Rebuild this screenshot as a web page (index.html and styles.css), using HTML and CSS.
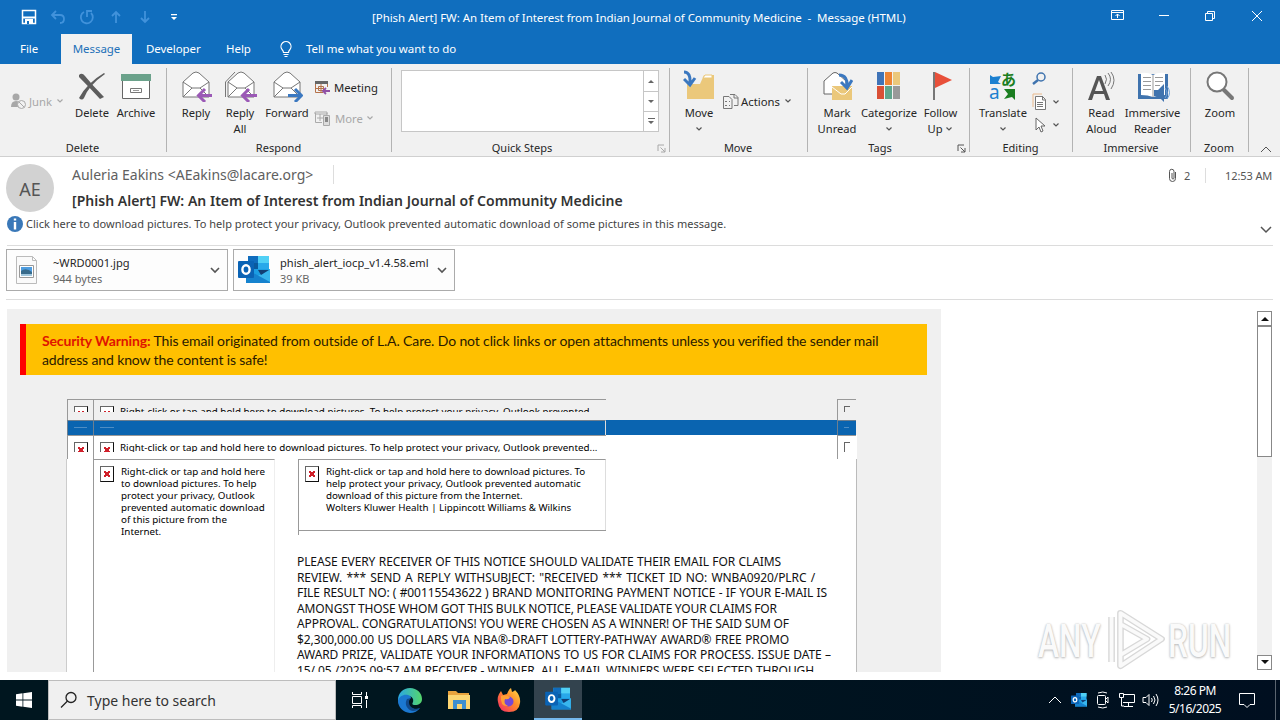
FILE: index.html
```html
<!DOCTYPE html>
<html lang="en">
<head>
<meta charset="utf-8">
<title>[Phish Alert] FW: An Item of Interest - Message (HTML)</title>
<link rel="stylesheet" href="styles.css">
</head>
<body>
<svg width="0" height="0" class="defs">
  <symbol id="chev" viewBox="0 0 8 6"><path d="M1.500 1.500 4 4l2.500-2.500" fill="none" stroke="currentColor" stroke-width="1.200"/></symbol>
  <symbol id="launch" viewBox="0 0 9 9"><path d="M1 7V1h6M3.500 3.500 8 8M8 4v4H4" fill="none" stroke="currentColor"/></symbol>
  <symbol id="outlook" viewBox="0 0 32 30">
    <path d="M10 1h21v14H10z" fill="#28a8ea"/><path d="M10 1h10v7H10z" fill="#0f6cbd"/><path d="M20 1h11v7H20z" fill="#50d0f5"/><path d="M10 8h10v7H10z" fill="#0a5a9e"/><path d="M8 14h24v14H8z" fill="#1b9de2"/><path d="M32 14 18 22l14 6z" fill="#38b6ee"/><path d="M8 14l24 13v1H8z" fill="#1582ce"/><path d="M20 15h11l-8 5z" fill="#123f75"/>
    <rect x="0" y="6" width="16" height="17" rx="1" fill="#0a63b5"/><ellipse cx="8" cy="14.500" rx="3.600" ry="4.300" fill="none" stroke="#fff" stroke-width="2.400"/>
  </symbol>
  <symbol id="env" viewBox="0 0 32 30"><path d="M3 12 13 3q3-2 6 0l10 9v15H3z" fill="#fff" stroke="#777"/><path d="m3 12 9 6h8l9-6M3 27l9-9M29 27l-9-9" fill="none" stroke="#777"/></symbol>
</svg>

<header class="titlebar">
  <div class="quick">
    <svg width="16" height="16" viewBox="0 0 16 16"><path d="M1.500 1.500h13v13h-13z" fill="none" stroke="#fff" stroke-width="1.500"/><path d="M1 7.500h14v2H1zM4 10h8v5H4z" fill="#fff"/><path d="M6 12h2v3H6z" fill="#106ebe"/></svg>
    <svg class="dim" width="16" height="16" viewBox="0 0 16 16"><path d="M6 2 2 6l4 4M2 6h8q4 0 4 4t-4 4" /></svg>
    <svg class="dim" width="16" height="16" viewBox="0 0 16 16"><path d="M5 3A6 6 0 1 0 12 4M8 8V2h5"/></svg>
    <svg class="dim" width="16" height="16" viewBox="0 0 16 16"><path d="M8 14V3M4 7l4-4 4 4"/></svg>
    <svg class="dim" width="16" height="16" viewBox="0 0 16 16"><path d="M8 2v11M4 9l4 4 4-4"/></svg>
    <svg width="16" height="16" viewBox="0 0 16 16"><path d="M5 5h6v1.300H5zM5 8h6l-3 3z" fill="#fff"/></svg>
  </div>
  <div class="title">[Phish Alert] FW: An Item of Interest from Indian Journal of Community Medicine&nbsp; -&nbsp; Message (HTML)</div>
  <svg class="winbtns" width="160" height="20" viewBox="0 0 160 20" fill="none" stroke="#fff"><path d="M5.500 5.500h12v9h-12zM5.500 7.500h12M11.500 13V9M9.500 11l2-2 2 2M53 10.500h10M99.500 8.500h7v7h-7zM101.500 8V6.500h7v7H107M146 6l10 10M156 6l-10 10"/></svg>
</header>
<nav class="tabs">
  <span class="tab file">File</span><span class="tab active">Message</span><span class="tab dev">Developer</span><span class="tab help">Help</span>
  <svg class="bulb" width="14" height="18" viewBox="0 0 14 18" fill="none" stroke="#fff" stroke-width="1.200"><path d="M4.500 12.500Q4.500 11 3 9.500a5 5 0 1 1 8 0q-1.500 1.500-1.500 3zM4.500 14.500h5M5.500 16.500h3"/></svg>
  <span class="tell">Tell me what you want to do</span>
</nav>

<section class="ribbon">
  <div class="group g-delete">
    <div class="items">
      <div class="small junk"><svg width="17" height="17" viewBox="0 0 17 17"><circle cx="6" cy="4" r="3.500" fill="#a8a8a8"/><path d="M1 14q0-6 5-6 4 0 4 2l-2 4z" fill="#a8a8a8"/><circle cx="11.500" cy="11.500" r="4" fill="#f1f1f1" stroke="#a8a8a8"/><path d="m9 9 5 5" stroke="#a8a8a8"/></svg><span>Junk</span><svg class="dd" width="8" height="6"><use href="#chev"/></svg></div>
      <div class="big b-del"><svg width="32" height="32" viewBox="0 0 32 32"><path d="M3 5q3-3 6 1 8 10 19 21l-4 2Q13 17 3 7z" fill="#5d5d5d"/><path d="M29 4Q13 15 8 28q-2 3-5 0Q11 13 28 3z" fill="#5d5d5d"/></svg><span>Delete</span></div>
      <div class="big b-arc"><svg width="32" height="32" viewBox="0 0 32 32"><path d="M2.500 9.500h27v19h-27z" fill="#fff" stroke="#666"/><path d="M1 4h30v7H1z" fill="#6ba28b"/><path d="M10.500 18.500h11v4h-11z" fill="#fff" stroke="#777"/><path d="M13 20.500h6" stroke="#999"/></svg><span>Archive</span></div>
    </div><div class="glabel">Delete</div>
  </div>
  <div class="group g-respond">
    <div class="items">
      <div class="big w44"><svg width="32" height="32" viewBox="0 0 32 32"><use href="#env" width="32" height="30"/><path d="M32 25.500H19M25 19l-6.500 6.500L25 32" fill="none" stroke="#9b59b6" stroke-width="3"/></svg><span>Reply</span></div>
      <div class="big w44"><svg width="34" height="32" viewBox="0 0 34 32"><path d="M2.500 27V12L12 2" fill="none" stroke="#777"/><use href="#env" x="2" width="32" height="30"/><path d="M34 25.500H20M26 19l-6.500 6.500L26 32" fill="none" stroke="#9b59b6" stroke-width="3"/></svg><span>Reply<br>All</span></div>
      <div class="big w50"><svg width="32" height="32" viewBox="0 0 32 32"><use href="#env" width="32" height="30"/><path d="M17 25.500h13M24 19l6.500 6.500L24 32" fill="none" stroke="#3b78c0" stroke-width="3"/></svg><span>Forward</span></div>
      <div class="stack">
        <div class="small"><svg width="16" height="16" viewBox="0 0 16 16"><path d="M1 2h13v3H1z" fill="#666"/><path d="M1.500 5v8.500H9M13.500 5v3M4.500 7.500h5v4h-5zM1 9.500h8M7 5v9" fill="none" stroke="#b5724a"/><path d="M16 12H9M12 9l-3 3 3 3" fill="none" stroke="#9050a5" stroke-width="1.800"/></svg><span class="meet">Meeting</span></div>
        <div class="small off"><svg width="17" height="16" viewBox="0 0 17 16"><path d="M1 2h12v2H1zM1.500 3v9.500H8M13 3v2M3 8h6M6 4v7" fill="none" stroke="#aaa"/><path d="M9.500 5.500h6v10h-6z" fill="#ddd" stroke="#aaa"/><path d="M11 7h3v5h-3z" fill="#888"/></svg><span class="meet">More</span><svg class="dd" width="8" height="6"><use href="#chev"/></svg></div>
      </div>
    </div><div class="glabel">Respond</div>
  </div>
  <div class="group g-quick">
    <div class="items"><div class="gallery"><div class="gspin"><svg width="7" height="5"><path d="M0 4h6L3 1z" fill="#666"/></svg><svg width="7" height="5"><path d="M0 1h6L3 4z" fill="#666"/></svg><svg width="7" height="8"><path d="M0 1h7v1H0zM0 4h6L3 7z" fill="#666"/></svg></div></div></div>
    <div class="glabel">Quick Steps<svg class="launch off" width="9" height="9"><use href="#launch"/></svg></div>
  </div>
  <div class="group g-move">
    <div class="items">
      <div class="big w40"><svg width="32" height="32" viewBox="0 0 32 32"><path d="M4 14h13l4-9h10v24H4z" fill="#ebc87b"/><path d="M20 8l2-3h7v3z" fill="#fff" stroke="#ebc87b"/><path d="M1 2q7 0 6 12M1 9l6 6 5-7" fill="none" stroke="#3b78c0" stroke-width="3"/></svg><span>Move</span><svg class="dd" width="8" height="6"><use href="#chev"/></svg></div>
      <div class="small act"><svg width="17" height="17" viewBox="0 0 17 17"><path d="M1.500 3.500H7l3 3v9H1.500zM8 1.500h5l3 3v8h-4M12 1v4h4M3 8.500h2M7 8.500h1M3 12.500h2M7 12.500h1" fill="none" stroke="#777"/></svg><span>Actions</span><svg class="dd" width="8" height="6"><use href="#chev"/></svg></div>
    </div><div class="glabel">Move</div>
  </div>
  <div class="group g-tags">
    <div class="items">
      <div class="big w44"><svg width="32" height="32" viewBox="0 0 32 32"><path d="M3 24V11l9-8q2-1 4 0l9 8v13z" fill="#fff" stroke="#666"/><path d="M11 16h20v14H11z" fill="#ebc87b"/><path d="m11 17 9 7h4l7-7" fill="none" stroke="#fff"/><path d="M18 5q9 0 8 12M20 12l6 6 5-8" fill="none" stroke="#3b78c0" stroke-width="3"/></svg><span>Mark<br>Unread</span></div>
      <div class="big w60"><svg width="32" height="32" viewBox="0 0 32 32"><path d="M4 2h7v13H4z" fill="#3f73b7"/><path d="M12 2h7v13h-7z" fill="#ed8434"/><path d="M20 2h7v13h-7z" fill="#ebc87b"/><path d="M4 16h7v13H4z" fill="#d94f35"/><path d="M12 16h7v13h-7z" fill="#5fa58c"/><path d="M20 16h7v13h-7z" fill="#999"/></svg><span>Categorize</span><svg class="dd" width="8" height="6"><use href="#chev"/></svg></div>
      <div class="big w43"><svg width="32" height="32" viewBox="0 0 32 32"><path d="M8 2h2v28H8z" fill="#777"/><path d="M10 2 27 10 10 18z" fill="#e8503a"/></svg><span>Follow<br>Up <svg class="dd in" width="8" height="6"><use href="#chev"/></svg></span></div>
    </div><div class="glabel">Tags<svg class="launch" width="9" height="9"><use href="#launch"/></svg></div>
  </div>
  <div class="group g-edit">
    <div class="items">
      <div class="big w48"><svg width="32" height="32" viewBox="0 0 32 32"><path d="M3 5l3 2 8-1-3 6 3 2H3z" fill="#1c80d0"/><text x="2" y="29" class="tr-a">a</text><text x="14" y="15" class="tr-j">あ</text><path d="M17 19h11v11l-3-3-8 2 4-5z" fill="#1b7e20"/></svg><span>Translate</span><svg class="dd" width="8" height="6"><use href="#chev"/></svg></div>
      <div class="tools">
        <div><svg width="16" height="16" viewBox="0 0 16 16" fill="none" stroke="#3f73ae"><circle cx="9" cy="6" r="4" stroke-width="1.500"/><path d="m6 9-5 4" stroke-width="2.500"/></svg></div>
        <div><svg width="16" height="18" viewBox="0 0 16 18"><path d="M1 14V1h9" fill="none" stroke="#e9b98c"/><path d="M3.500 3.500h7l3 3v10h-10zM10.500 3v4h3M5 9.500h6M5 11.500h6M5 13.500h6" fill="#fff" stroke="#777"/></svg><svg class="dd" width="8" height="6"><use href="#chev"/></svg></div>
        <div><svg width="16" height="16" viewBox="0 0 16 16"><path d="M4 1v12l3-3 2 5 2-1-2-5h4z" fill="#fff" stroke="#666"/></svg><svg class="dd" width="8" height="6"><use href="#chev"/></svg></div>
      </div>
    </div><div class="glabel">Editing</div>
  </div>
  <div class="group g-imm">
    <div class="items">
      <div class="big w43"><svg width="32" height="32" viewBox="0 0 32 32"><path fill-rule="evenodd" d="m2 30 9-24h4l9 24h-4l-2-6H8l-2 6zm7-9h8l-4-11z" fill="#555"/><path d="M19 5q3 4 0 9M22 3q5 6 0 13M25 2q6 8 0 17" fill="none" stroke="#777"/></svg><span>Read<br>Aloud</span></div>
      <div class="big w59"><svg width="34" height="32" viewBox="0 0 34 32"><path d="M2 4h30v25H2z" fill="#3f73ae"/><path d="M5 3q7-1 12 2v22q-5-2-12-2zM29 3q-7-1-12 2v22q5-2 12-2z" fill="#fff"/><path d="M7 7.500h8M7 11.500h8M7 15.500h8M7 19.500h8M19 7.500h8M19 11.500h8M19 15.500h5M17 5v22" stroke="#999"/><path d="M18 20h4l6-6v18l-6-6h-4z" fill="#3f73ae"/><path d="M29 18q4 5 0 10M31 16q5 7 0 13" fill="none" stroke="#6ca0d8"/></svg><span>Immersive<br>Reader</span></div>
    </div><div class="glabel">Immersive</div>
  </div>
  <div class="group g-zoom">
    <div class="items"><div class="big w58"><svg width="32" height="32" viewBox="0 0 32 32"><path d="m20 20 8 8" stroke="#777" stroke-width="4" stroke-linecap="round"/><circle cx="13" cy="12" r="9.500" fill="#fff" stroke="#777" stroke-width="2"/></svg><span>Zoom</span></div></div>
    <div class="glabel">Zoom</div>
  </div>
  <svg class="collapse" width="12" height="7" viewBox="0 0 12 7"><path d="m1 6 5-5 5 5" fill="none" stroke="#555"/></svg>
</section>

<main class="reader">
  <section class="mailhead">
    <div class="avatar">AE</div>
    <div class="who"><div class="from"><span>Auleria Eakins &lt;AEakins@lacare.org&gt;</span></div><div class="subject">[Phish Alert] FW: An Item of Interest from Indian Journal of Community Medicine</div></div>
    <div class="meta"><svg width="9" height="15" viewBox="0 0 9 15"><path d="M7.500 4v6.500a3 3 0 0 1-6 0V3.500a2 2 0 0 1 4.500 0V10a1 1 0 0 1-2 0V5" fill="none" stroke="#555"/></svg><span class="cnt">2</span><span class="time">12:53 AM</span></div>
  </section>
  <section class="infobar"><svg width="16" height="16" viewBox="0 0 16 16"><circle cx="8" cy="8" r="8" fill="#3a78b8"/><path d="M6.800 2.500h2.400v2H6.800zM6.800 6h2.400v7.500H6.800z" fill="#fff"/></svg><span>Click here to download pictures. To help protect your privacy, Outlook prevented automatic download of some pictures in this message.</span><svg class="more" width="12" height="8" viewBox="0 0 12 8"><path d="m1 1 5 5 5-5" fill="none" stroke="#555" stroke-width="1.500"/></svg></section>
  <section class="attachments">
    <div class="att"><svg class="jpg" width="32" height="32" viewBox="0 0 32 32"><path d="M5.500 2.500h16l4 4v23h-20zM21.500 2.500v4h4" fill="#fafafa" stroke="#bbb"/><path d="M8.500 11.500h14v12h-14z" fill="#fff" stroke="#999"/><path d="M10 13h11v9H10z" fill="#4e9de0"/><path d="M10 17q5-4 11 1v4H10z" fill="#376b8c"/><path d="M10 20h11v2H10z" fill="#9fc6dd"/></svg><div class="fn"><b class="n1">~WRD0001.jpg</b><small>944 bytes</small></div><svg class="ac" width="10" height="7" viewBox="0 0 10 7"><path d="m1 1 4 4 4-4" fill="none" stroke="#555" stroke-width="1.600"/></svg></div>
    <div class="att"><svg width="32" height="30"><use href="#outlook"/></svg><div class="fn"><b class="n2">phish_alert_iocp_v1.4.58.eml</b><small>39 KB</small></div><svg class="ac" width="10" height="7" viewBox="0 0 10 7"><path d="m1 1 4 4 4-4" fill="none" stroke="#555" stroke-width="1.600"/></svg></div>
  </section>
  <section class="viewport">
    <div class="mail">
      <div class="warning"><div class="wl wl1"><b>Security Warning:</b> This email originated from outside of L.A. Care. Do not click links or open attachments unless you verified the sender mail</div><div class="wl wl2">address and know the content is safe!</div></div>
      <div class="sheet">
        <div class="strip s1"><div class="cell c1"><i class="ph"></i></div><div class="cell c2"><i class="ph"></i><span class="pt">Right-click or tap and hold here to download pictures. To help protect your privacy, Outlook prevented</span></div><div class="cell c3"><i class="ph"></i></div></div>
        <div class="strip s2"><div class="cell c1"><i class="dash"></i></div><div class="cell c2"><i class="dash"></i></div><div class="cell c3"><i class="dash short"></i></div></div>
        <div class="strip s3"><div class="cell c1"><i class="ph"></i></div><div class="cell c2"><i class="ph"></i><span class="pt">Right-click or tap and hold here to download pictures. To help protect your privacy, Outlook prevented...</span></div><div class="cell c3"><i class="ph"></i></div></div>
        <div class="cols">
          <div class="side"><i class="ph"></i><span class="pt">Right-click or tap and hold here<br>to download pictures. To help<br>protect your privacy, Outlook<br>prevented automatic download<br>of this picture from the<br>Internet.</span></div>
          <div class="content">
            <div class="logo"><i class="ph"></i><span class="pt">Right-click or tap and hold here to download pictures. To<br>help protect your privacy, Outlook prevented automatic<br>download of this picture from the Internet.<br>Wolters Kluwer Health | Lippincott Williams &amp; Wilkins</span></div><div class="stub"></div>
            <div class="text">
              <div class="l1">PLEASE EVERY RECEIVER OF THIS NOTICE SHOULD VALIDATE THEIR EMAIL FOR CLAIMS</div>
              <div class="l2">REVIEW. *** SEND A REPLY WITHSUBJECT: "RECEIVED *** TICKET ID NO: WNBA0920/PLRC /</div>
              <div class="l3">FILE RESULT NO: ( #00115543622 ) BRAND MONITORING PAYMENT NOTICE - IF YOUR E-MAIL IS</div>
              <div class="l4">AMONGST THOSE WHOM GOT THIS BULK NOTICE, PLEASE VALIDATE YOUR CLAIMS FOR</div>
              <div class="l5">APPROVAL. CONGRATULATIONS! YOU WERE CHOSEN AS A WINNER! OF THE SAID SUM OF</div>
              <div class="l6">$2,300,000.00 US DOLLARS VIA NBA®-DRAFT LOTTERY-PATHWAY AWARD® FREE PROMO</div>
              <div class="l7">AWARD PRIZE, VALIDATE YOUR INFORMATIONS TO US FOR CLAIMS FOR PROCESS. ISSUE DATE –</div>
              <div class="l8">15/ 05 /2025 09:57 AM RECEIVER - WINNER. ALL E-MAIL WINNERS WERE SELECTED THROUGH</div>
            </div>
          </div>
        </div>
      </div>
    </div>
    <div class="scroll"><div class="sb"><svg width="8" height="5"><path d="M0 5h8L4 1z" fill="#111"/></svg></div><div class="thumb"></div><div class="track"></div><div class="sb"><svg width="8" height="5"><path d="M0 0h8L4 4z" fill="#111"/></svg></div></div>
  </section>
</main>
<div class="watermark"><span>ANY</span><svg width="60" height="66" viewBox="5 0 54 66" preserveAspectRatio="none"><g fill="none" stroke-linejoin="round"><path d="M18 58V5l37 26-37 27V16l24 15-24 16M10 54V9" stroke="#d8d8d8" stroke-width="6"/><path d="M18 58V5l37 26-37 27V16l24 15-24 16M10 54V9" stroke="#fafafa" stroke-width="3.500"/></g></svg><span>RUN</span></div>

<footer class="taskbar">
  <div class="start"><svg width="16" height="16" viewBox="0 0 16 16"><path d="M0 2.200 6.500 1.300V7.600H0zM7.300 1.200 16 0v7.600H7.300zM0 8.400h6.500v6.300L0 13.800zM7.300 8.400H16V16l-8.700-1.200z" fill="#fff"/></svg></div>
  <div class="search"><svg width="18" height="18" viewBox="0 0 18 18" fill="none" stroke="#222" stroke-width="1.300"><circle cx="11" cy="6.500" r="5"/><path d="m7.500 10-6.500 6.500"/></svg><span>Type here to search</span></div>
  <div class="task"><svg width="18" height="18" viewBox="0 0 18 18" fill="none" stroke="#fff"><path d="M1.500 1v2.500h9V1M1.500 5.500h9v7h-9zM1.500 17v-2.500h9V17M15.500 1v4M15.500 9v8"/><path d="M14 5h3v3h-3z" fill="#fff" stroke="none"/></svg></div>
  <div class="task"><svg width="26" height="26" viewBox="0 0 26 26"><defs><linearGradient id="e1" x1="0" y1="0" x2="1" y2="0"><stop offset="0" stop-color="#2aa7e5"/><stop offset="1" stop-color="#55d66b"/></linearGradient></defs><path d="M1 13C1 6 6 1 13 1s12 5 12 11c0 4-3 6-7 6-3 0-3-1-2-3 1-3-1-6-5-6-5 0-9 3-9 8z" fill="url(#e1)"/><path d="M1 14c1-5 6-7 10-6 2 .5 3 2 3 3-5 3-3 10 3 11 3 .5 5-.5 6-1-2 3-6 5-10 5C6 25.500 1 20 1 14z" fill="#1b78d0"/><path d="M10 12c-3 5 0 11 6 12 3 0 5-1 7-3-5 2-11 0-11-6 0-2 1-3 2-4z" fill="#114a8b"/></svg></div>
  <div class="task"><svg width="24" height="24" viewBox="0 0 24 24"><path d="M1 3h8l2 2h11v5H1z" fill="#e8a33d"/><path d="M1 7h22v14H1z" fill="#fcd672"/><path d="M6 12h13v9h-4v-5h-5v5H6z" fill="#3d8fd0"/></svg></div>
  <div class="task"><svg width="26" height="26" viewBox="0 0 26 26"><defs><linearGradient id="f1" x1="1" y1="0" x2="0" y2="1"><stop offset="0" stop-color="#ffe14a"/><stop offset=".45" stop-color="#ff8a2a"/><stop offset="1" stop-color="#f4246c"/></linearGradient></defs><path d="M3 7l2-3 2 4 4-1q2-5 4-6l1 4q3-1 3-2 6 6 5 13-1 9-11 9T2 15q-1-4 1-8z" fill="url(#f1)"/><circle cx="12.500" cy="14.500" r="5" fill="#7548d8"/><path d="M5 9q5-2 9 1-1 3-5 2-2 5 3 7-8 1-7-10z" fill="#ff9f35"/></svg></div>
  <div class="task on"><svg width="26" height="24"><use href="#outlook"/></svg></div>
  <div class="tray"><div class="icons">
    <svg width="14" height="8" viewBox="0 0 14 8" fill="none" stroke="#fff"><path d="m1 7 6-6 6 6"/></svg>
    <svg width="16" height="16"><use href="#outlook"/></svg>
    <svg width="16" height="18" viewBox="0 0 16 18" fill="none" stroke="#fff"><path d="M3 2q5-2 9 0M3 16q5 2 9 0"/><rect x="2.500" y="4.500" width="8" height="9" rx="1"/><path d="m11 8 2-2v6l-2-2"/></svg>
    <svg width="18" height="16" viewBox="0 0 18 16" fill="none" stroke="#fff"><path d="M5 2.500h11.500v8H5M10.500 11v3M6 14.500h9M1.500 1.500h4v4h-4zM3.500 6v8H6"/></svg>
    <svg width="18" height="16" viewBox="0 0 18 16" fill="none" stroke="#fff"><path d="M1 5.500h3l3-3v11l-3-3H1zM9.500 6q1.500 2 0 4M11.500 4q3 4 0 8M14 2q4 6 0 12"/></svg></div>
    <div class="clock">8:26 PM<br>5/16/2025</div>
    <svg class="note" width="18" height="18" viewBox="0 0 18 18" fill="none" stroke="#fff"><path d="M1.500 2.500h15v11H12l-3 3-3-3H1.500z"/></svg>
    <i class="peek"></i>
  </div>
</footer>
</body>
</html>
```
FILE: styles.css
```css
* { box-sizing: border-box; }
body { margin: 0; width: 1280px; height: 720px; overflow: hidden; background: #fff; color: #262626; font-family: "Noto Sans", sans-serif; font-size: 12px; display: flex; flex-direction: column; }
svg { display: block; flex: none; }
.defs { position: absolute; }
.titlebar { height: 34px; background: #106ebe; color: #fff; display: flex; align-items: center; flex: none; }
.quick { display: flex; gap: 13px; padding-left: 21px; width: 372px; }
.dim path { fill: none; stroke: #4192db; stroke-width: 1.800; }
.title { width: 640px; line-height: 18px; white-space: nowrap; padding-top: 2px; font-size: 11.500px; letter-spacing: -.05px; }
.winbtns { margin: -5px 0 0 94px; }
.tabs { height: 30px; background: #106ebe; color: #fff; display: flex; align-items: stretch; line-height: 30px; flex: none; white-space: nowrap; font-size: 11.500px; letter-spacing: -.06px; }
.file { width: 61px; padding-left: 20px; }
.active { width: 71px; background: #f1f1f1; color: #2270b8; text-align: center; }
.dev { padding-left: 14px; width: 94px; }
.help { width: 53px; }
.bulb { margin: 6px 13px 0 0; }
.ribbon { height: 93px; background: #f1f1f1; border-bottom: 1px solid #d0d0d0; display: flex; padding-top: 4px; flex: none; }
.group { height: 87px; display: flex; flex-direction: column; background: linear-gradient(#b3b3b3, #b3b3b3) right top / 1px 84px no-repeat; flex: none; }
.items { height: 73px; display: flex; }
.glabel { line-height: 14px; text-align: center; font-size: 11px; position: relative; padding-right: 2px; }
.launch { position: absolute; right: 4px; top: 3px; color: #555; }
.off { color: #a8a8a8; }
.g-delete { width: 167px; } .g-respond { width: 225px; } .g-quick { width: 278px; } .g-move { width: 138px; }
.g-tags { width: 162px; } .g-edit { width: 103px; } .g-imm { width: 118px; } .g-zoom { width: 58px; }
.g-quick .glabel, .g-tags .glabel { padding-right: 18px; }
.g-respond .items, .g-tags .items, .g-imm .items { padding-left: 7px; }
.g-quick .items, .g-move .items, .g-edit .items { padding-left: 9px; }
.big { display: flex; flex-direction: column; align-items: center; text-align: center; line-height: 16px; font-size: 11.200px; letter-spacing: -.03px; white-space: nowrap; }
.big > svg:first-child { margin: 2px 0 3px; }
.b-del, .b-arc, .w44 { width: 44px; } .w50 { width: 50px; } .w40 { width: 40px; } .w60 { width: 60px; }
.w43 { width: 43px; } .w48 { width: 48px; } .w59 { width: 59px; } .w58 { width: 58px; }
.dd { color: #555; }
.off .dd, .junk .dd { color: #a8a8a8; }
.big > .dd { margin-top: 5px; }
.in { display: inline-block; vertical-align: 1px; }
.small { display: flex; align-items: center; height: 20px; font-size: 11.300px; white-space: nowrap; }
.junk { width: 60px; margin: 23px 0 0 10px; color: #a8a8a8; gap: 2px; }
.small .dd { margin-left: 3px; }
.junk .dd { margin-left: 2px; }
.meet { margin-left: 4px; }
.stack { padding: 9px 0 0 2px; display: flex; flex-direction: column; gap: 11px; }
.act { margin: 23px 0 0 3px; gap: 2px; }
.act .dd { margin-left: 2px; }
.gallery { width: 258px; height: 62px; margin-top: 2px; border: 1px solid #c6c6c6; background: #fff; display: flex; justify-content: flex-end; }
.gspin { width: 15px; border-left: 1px solid #c6c6c6; display: grid; grid-template-rows: 20px 20px 20px; align-items: center; justify-items: center; background: linear-gradient(#c6c6c6, #c6c6c6) 0 20px / 100% 1px no-repeat, linear-gradient(#c6c6c6, #c6c6c6) 0 40px / 100% 1px no-repeat; }
.tr-a { font: 19px/1 "Noto Sans", sans-serif; fill: #1c80d0; }
.tr-j { font: bold 15px/1 "Noto Sans CJK JP", sans-serif; fill: #1b7e20; }
.tools { padding: 0 0 0 5px; margin-top: -1px; }
.tools > div { height: 23px; display: flex; align-items: center; gap: 4px; }
.collapse { margin: 78px 0 0 11px; }

.reader { height: 523px; display: flex; flex-direction: column; flex: none; }
.mailhead { height: 57px; display: flex; padding-left: 6px; flex: none; }
.avatar { width: 48px; height: 48px; margin-top: 7px; border-radius: 50%; background: #d2d2d2; color: #555; text-align: center; font-size: 18px; line-height: 50px; }
.who { margin-left: 18px; width: 1096px; white-space: nowrap; }
.from { width: 262px; margin-top: 8px; height: 19px; line-height: 19px; border-right: 1px solid #ddd; font-size: 14px; color: #606060; }
.subject { font-weight: 600; font-size: 14px; line-height: 20px; margin-top: 7px; color: #333; letter-spacing: .02px; }
.meta { display: flex; height: 19px; margin-top: 9px; align-items: center; font-size: 11px; color: #555; white-space: nowrap; letter-spacing: -.1px; }
.cnt { margin-left: 7px; width: 22px; border-right: 1px solid #ddd; }
.time { margin-left: 19px; }
.infobar { height: 32px; display: flex; margin: 0 7px; border-bottom: 1px solid #dcdcdc; font-size: 11px; letter-spacing: .02px; line-height: 20px; white-space: nowrap; color: #444; flex: none; }
.infobar svg { margin-top: 2px; }
.infobar span { margin-left: 3px; width: 1234px; }
.infobar .more { margin-top: 12px; }
.attachments { height: 54px; display: flex; gap: 5px; padding-top: 3px; margin: 0 7px 0 6px; border-bottom: 1px solid #dcdcdc; flex: none; }
.att { width: 222px; height: 42px; border: 1px solid #ababab; background: #fdfdfd; display: flex; align-items: center; padding-left: 4px; }
.fn { width: 161px; padding: 2px 0 0 10px; font-size: 11.100px; line-height: 16px; white-space: nowrap; }
.fn b { font-weight: 400; display: block; }
.fn small { font-size: 11px; display: block; color: #666; }
.ac { margin-left: 6px; }
.viewport { height: 372px; display: flex; padding: 9px 0 0 7px; flex: none; }
.mail { width: 934px; height: 363px; overflow: hidden; background: #f0f0f0; padding: 15px 14px 0 13px; }
.warning { height: 51px; background: #ffc000; border-left: 6px solid #f00; padding: 7px 0 0 16px; font-family: Lato, sans-serif; font-size: 14px; letter-spacing: -.13px; line-height: 19px; color: #2a1a00; white-space: nowrap; }
.warning b { color: #e01400; }
.sheet { width: 791px; margin: 24px 0 0 46px; }
.strip { display: grid; grid-template-columns: 26px 744px 20px; padding-left: 1px; }
.cell { border: solid #999; border-width: 1px 0 0 1px; display: flex; overflow: hidden; }
.strip .c2 { width: 513px; }
.strip .c3 { width: 19px; }
.s1 { height: 21px; } .s2 { height: 15px; background: linear-gradient(#0a64b0, #0a64b0) 1px 0 / 789px 100% no-repeat; } .s3 { height: 24px; background: linear-gradient(#fff, #fff) 1px 0 / 790px 100% no-repeat; }
.s1 .cell { padding: 6px 6px 8px; }
.s3 .cell { padding: 6px 6px 8px; }
.s1 .ph, .s1 .pt, .s3 .ph, .s3 .pt { clip-path: inset(0 0 var(--cut) 0); }
.s1 { --cut: 10px; } .s3 { --cut: 6px; }
.s1 .pt { --cut: 6px; } .s3 .pt { --cut: 2px; }
.strip .c2 { padding-right: 0; }
.strip .c3 .ph { width: 6px; background: none; border-right: 0; }
.s2 .cell { border-color: #6d7f90; padding: 6px 6px; }
.s2 .c2 { border-right: 1px solid #ddd; }
.dash { width: 14px; height: 1px; background: #4e8dc4; }
.short { width: 5px; }
.ph { flex: none; width: 14px; height: 16px; border: 1px solid #666; border-right-color: #111; border-bottom-color: #111; background: linear-gradient(45deg, transparent 39%, #d0202a 39% 61%, transparent 61%) 3px 4px / 6px 6px no-repeat, linear-gradient(-45deg, transparent 39%, #d0202a 39% 61%, transparent 61%) 3px 4px / 6px 6px no-repeat, #fff; }
.pt { font-size: 9.800px; line-height: 12px; color: #000; white-space: nowrap; margin-left: 7px; height: 12px; flex: none; }
.strip .pt { margin-left: 6px; letter-spacing: .02px; }
.cols { display: flex; background: #fff; border-left: 1px solid #ccc; border-right: 1px solid #bbb; height: 260px; }
.side { margin-left: 26px; width: 182px; border: solid #999; border-width: 1px 1px 0 1px; border-right-color: #eee; padding: 6px; display: flex; }
.content { margin-left: 23px; }
.logo { width: 308px; height: 71px; border: solid #999; border-width: 1px 1px 0 1px; border-right-color: #ddd; padding: 6px; display: flex; }
.stub { width: 308px; height: 5px; border: solid #999; border-width: 1px 0 0 1px; }
.text { margin-top: 19px; font-size: 12px; line-height: 15.500px; color: #111; margin-left: -1px; }
.text div { text-align-last: justify; white-space: nowrap; letter-spacing: -.1px; word-spacing: -2px; height: 15.500px; }
.l1 { width: 484px; } .l2 { width: 518px; } .l3 { width: 530px; } .l4 { width: 480px; }
.l5 { width: 492px; } .l6 { width: 492px; } .l7 { width: 534px; } .l8 { width: 517px; }
.scroll { margin: 2px 0 0 316px; width: 15px; display: flex; flex-direction: column; background: #f1f1f1; height: 359px; }
.sb { height: 15px; border: 1px solid #888; background: #fff; display: flex; align-items: center; justify-content: center; flex: none; }
.thumb { height: 131px; border: 1px solid #888; background: #fff; flex: none; }
.track { flex: 1; }
.watermark { position: absolute; left: 1038px; top: 608px; display: flex; align-items: center; color: #fafafa; font: 500 46px/66px Roboto, sans-serif; text-shadow: 0 0 2px #bbb, 0 1px 3px #bbb; }
.watermark span { display: block; width: 64px; transform: scaleX(.69); transform-origin: 0 50%; }
.watermark svg { margin: 0 2px 0 4px; }

.taskbar { height: 40px; background: linear-gradient(90deg, #00161f 40%, #000f20 100%); display: flex; align-items: stretch; flex: none; }
.start { width: 48px; display: flex; align-items: center; justify-content: center; }
.search { width: 288px; background: #f0f0f0; border: 1px solid #bdbdbd; display: flex; align-items: center; padding-left: 11px; gap: 9px; font-size: 14px; color: #333; }
.task { width: 48px; display: flex; align-items: center; justify-content: center; margin-right: 1.500px; }
.on { background: #33434e; border-bottom: 2px solid #76b9ed; }
.tray { margin-left: auto; display: flex; align-items: center; color: #fff; padding-right: 4px; }
.icons { display: grid; grid-template-columns: repeat(5, 24px); align-items: center; justify-items: center; margin-right: -2px; }
.clock { width: 68px; text-align: center; line-height: 18px; letter-spacing: -.5px; margin-right: 9px; }
.peek { width: 1px; height: 40px; background: #5a6570; margin-left: 19px; }
```
